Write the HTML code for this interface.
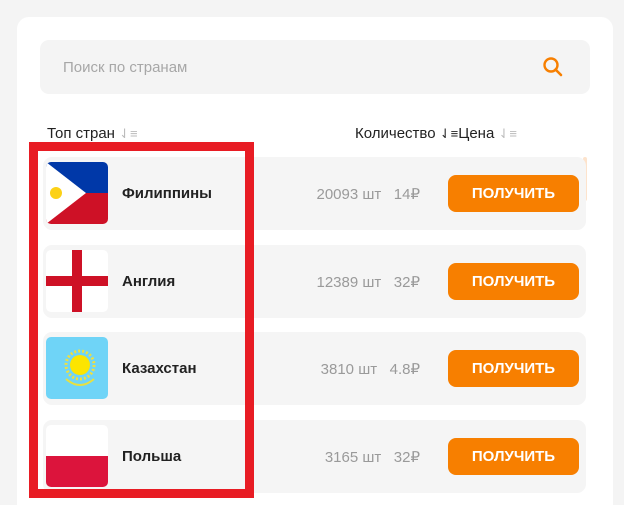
<!DOCTYPE html>
<html><head><meta charset="utf-8"><style>
*{margin:0;padding:0;box-sizing:border-box}
html,body{width:624px;height:505px;overflow:hidden}
body{background:#f4f4f4;font-family:"Liberation Sans",sans-serif;position:relative}
.card{position:absolute;left:17px;top:17px;width:596px;height:488px;background:#fff;border-radius:12px 12px 0 0}
.search{position:absolute;left:40px;top:40px;width:550px;height:54px;background:#f4f4f4;border-radius:9px}
.search span{position:absolute;left:23px;top:19px;font-size:15px;color:#a7a7a7}
.hdr{position:absolute;top:125px;font-size:15px;color:#222}
.row{position:absolute;left:43px;width:543px;height:73px;background:#f5f5f5;border-radius:9px}
.flag{position:absolute;left:3px;top:5px;width:62px;height:62px;border-radius:5px;overflow:hidden;background:#fff}
.name{position:absolute;left:79px;top:28px;font-size:15px;font-weight:bold;color:#222}
.qty{position:absolute;right:166px;top:28px;font-size:15px;color:#9a9a9a;text-align:right}
.btn{position:absolute;left:405px;top:18px;width:131px;height:37px;background:#f77f00;border-radius:8px;color:#fff;font-weight:bold;font-size:15px;text-align:center;line-height:37px}
.red{position:absolute;left:29px;top:142px;width:225px;height:356px;border:9px solid #e81c24}
</style></head><body>
<div class="card"></div>
<div class="search"><span>Поиск по странам</span>
<svg style="position:absolute;left:502px;top:16px" width="22" height="22" viewBox="0 0 22 22"><circle cx="9" cy="9" r="6.5" fill="none" stroke="#f77f00" stroke-width="2.4"/><line x1="13.5" y1="13.5" x2="19" y2="19" stroke="#f77f00" stroke-width="2.6" stroke-linecap="round"/></svg></div>
<div class="hdr" style="left:47px">Топ стран <span style="color:#bbb;font-size:13px">⇃≡</span></div>
<div class="hdr" style="left:355px">Количество <span style="font-size:13px">⇃≡</span>Цена <span style="color:#bbb;font-size:13px">⇃≡</span></div>
<div style="position:absolute;left:583px;top:157px;width:4px;height:44px;background:#fde3cc;border-radius:2px"></div>

<div class="row" style="top:157px"><div class="flag"><svg width="62" height="62" viewBox="0 0 62 62"><rect width="62" height="31" fill="#0038a8"/><rect y="31" width="62" height="31" fill="#ce1126"/><polygon points="0,0 40,31 0,62" fill="#fff"/><circle cx="10" cy="31" r="6" fill="#fcd116"/></svg></div><div class="name">Филиппины</div><div class="qty">20093 шт &nbsp; 14₽</div><div class="btn">ПОЛУЧИТЬ</div></div>

<div class="row" style="top:245px"><div class="flag"><svg width="62" height="62"><rect x="26" width="10" height="62" fill="#ce1126"/><rect y="26" width="62" height="10" fill="#ce1126"/></svg></div><div class="name">Англия</div><div class="qty">12389 шт &nbsp; 32₽</div><div class="btn">ПОЛУЧИТЬ</div></div>

<div class="row" style="top:332px"><div class="flag" style="background:#6fd4f7"><svg width="62" height="62"><circle cx="34" cy="28" r="14" fill="none" stroke="#f0e040" stroke-width="3" stroke-dasharray="2 2"/><circle cx="34" cy="28" r="10" fill="#fce500"/><path d="M20 42 Q34 54 48 42" fill="none" stroke="#e8e040" stroke-width="2"/></svg></div><div class="name">Казахстан</div><div class="qty">3810 шт &nbsp; 4.8₽</div><div class="btn">ПОЛУЧИТЬ</div></div>

<div class="row" style="top:420px"><div class="flag"><svg width="62" height="62"><rect y="31" width="62" height="31" fill="#dc143c"/></svg></div><div class="name">Польша</div><div class="qty">3165 шт &nbsp; 32₽</div><div class="btn">ПОЛУЧИТЬ</div></div>

<div class="red"></div>
</body></html>
